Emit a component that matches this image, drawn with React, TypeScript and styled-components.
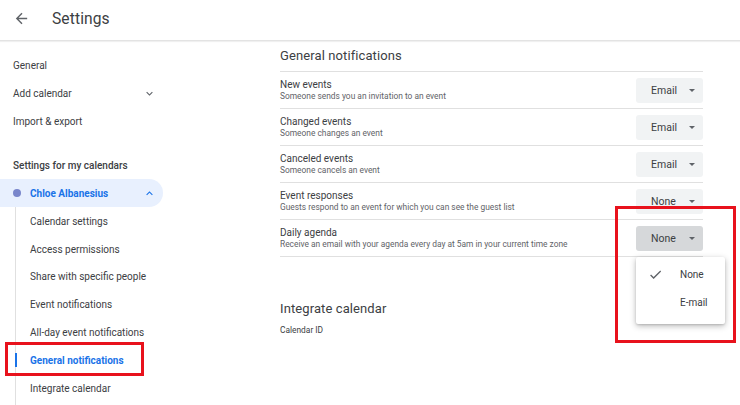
import React from "react";
import styled, { createGlobalStyle } from "styled-components";

const Global = createGlobalStyle`
  html, body { margin: 0; padding: 0; background: #fff; }
  body { font-family: Roboto, "Noto Sans", Arial, sans-serif; color: #3c4043; }
  * { box-sizing: border-box; }
`;

const Page = styled.div`
  width: 740px;
  height: 405px;
  overflow: hidden;
  position: relative;
  background: #fff;
`;

const Header = styled.header`
  height: 41px;
  display: flex;
  align-items: center;
  gap: 22px;
  padding-left: 13px;
  border-bottom: 1px solid #e3e3e3;
  box-shadow: 0 1px 1px rgba(0, 0, 0, 0.06);
`;

const BackBtn = styled.div`
  width: 17px;
  height: 17px;
  display: flex;
  align-items: center;
  justify-content: center;
  margin-top: -3px;
`;

const Title = styled.h1`
  margin: 0 0 3px;
  font-size: 15.6px;
  font-weight: 400;
  color: #3c4043;
  letter-spacing: 0.1px;
`;

const Body = styled.div`
  display: flex;
`;

const Sidebar = styled.nav`
  width: 280px;
  flex: none;
  padding-top: 11px;
`;

const NavItem = styled.div<{ $active?: boolean; $indent?: boolean }>`
  position: relative;
  height: 27.8px;
  display: flex;
  align-items: center;
  padding-left: ${(p) => (p.$indent ? "14px" : "13px")};
  width: 163px;
  font-size: 10px;
  font-weight: ${(p) => (p.$active ? 700 : 400)};
  color: ${(p) => (p.$active ? "#1a73e8" : "#3c4043")};
  justify-content: space-between;
  padding-right: 7px;
`;

const SectionLabel = styled.div`
  height: 28px;
  margin-top: 16px;
  display: flex;
  align-items: center;
  padding-left: 13px;
  font-size: 10px;
  font-weight: 500;
  color: #3c4043;
`;

const CalendarPill = styled.div`
  height: 28px;
  width: 163px;
  background: #e8f0fe;
  border-radius: 0 14px 14px 0;
  display: flex;
  align-items: center;
  padding-left: 13px;
  padding-right: 7px;
  gap: 9px;
  font-size: 10px;
  font-weight: 700;
  color: #1a73e8;
`;

const Dot = styled.span`
  width: 8px;
  height: 8px;
  border-radius: 50%;
  background: #7986cb;
  flex: none;
`;

const PillLabel = styled.span`
  flex: 1;
`;

const SubList = styled.div`
  margin-left: 15px;
  border-left: 1px solid #e0e0e0;
  padding-bottom: 20px;
`;

const ActiveBar = styled.span`
  position: absolute;
  left: -1px;
  top: 7px;
  width: 2px;
  height: 14px;
  background: #1a73e8;
`;

const Annotation = styled.div<{ $top: number; $left: number; $w: number; $h: number }>`
  position: absolute;
  top: ${(p) => p.$top}px;
  left: ${(p) => p.$left}px;
  width: ${(p) => p.$w}px;
  height: ${(p) => p.$h}px;
  border: 3px solid #e8121c;
  pointer-events: none;
  z-index: 5;
`;

const Main = styled.main`
  flex: 1;
  padding-right: 37px;
`;

const SectionTitle = styled.h2<{ $top?: number }>`
  margin: 0;
  height: ${(p) => (p.$top ? "auto" : "30px")};
  padding-top: ${(p) => p.$top ?? 0}px;
  padding-bottom: ${(p) => (p.$top ? 0 : 2)}px;
  font-size: 13px;
  font-weight: 400;
  color: #3c4043;
  display: flex;
  align-items: center;
  letter-spacing: 0.1px;
`;

const List = styled.div`
  border-top: 1px solid #e0e0e0;
`;

const Row = styled.div`
  height: 37px;
  border-bottom: 1px solid #e0e0e0;
  display: flex;
  align-items: center;
  justify-content: space-between;
`;

const RowText = styled.div`
  display: flex;
  flex-direction: column;
`;

const RowTitle = styled.div`
  font-size: 10px;
  color: #3c4043;
  line-height: 12px;
`;

const RowSub = styled.div`
  font-size: 8.4px;
  color: #5f6368;
  line-height: 11px;
`;

const SelectWrap = styled.div`
  position: relative;
`;

const Select = styled.div<{ $pressed?: boolean }>`
  width: 67px;
  height: 25px;
  border-radius: 3px;
  background: ${(p) => (p.$pressed ? "#d6d8da" : "#f1f3f4")};
  display: flex;
  align-items: center;
  padding-left: 15px;
  padding-right: 8px;
  justify-content: space-between;
  font-size: 10.5px;
  color: #3c4043;
`;

const Caret = styled.span`
  width: 0;
  height: 0;
  border-left: 3.5px solid transparent;
  border-right: 3.5px solid transparent;
  border-top: 3.5px solid #5f6368;
`;

const Menu = styled.div`
  position: absolute;
  top: 31px;
  left: 0;
  width: 89px;
  height: 67px;
  background: #fff;
  box-shadow: 0 2px 6px rgba(0, 0, 0, 0.28), 0 1px 2px rgba(0, 0, 0, 0.12);
  border-radius: 2px;
  padding-top: 4px;
  z-index: 4;
`;

const MenuItem = styled.div`
  height: 28px;
  display: flex;
  align-items: center;
  padding-left: 12px;
  gap: 17px;
  font-size: 10px;
  color: #3c4043;
`;

const CheckSlot = styled.span`
  width: 15px;
  height: 15px;
  display: flex;
  align-items: center;
`;

const SmallLabel = styled.div`
  margin-top: 9px;
  font-size: 8.4px;
  color: #3c4043;
`;

const rows = [
  { t: "New events", s: "Someone sends you an invitation to an event", v: "Email" },
  { t: "Changed events", s: "Someone changes an event", v: "Email" },
  { t: "Canceled events", s: "Someone cancels an event", v: "Email" },
  { t: "Event responses", s: "Guests respond to an event for which you can see the guest list", v: "None" },
];

const Chevron = ({ up }: { up?: boolean }) => (
  <svg width="13" height="13" viewBox="0 0 24 24">
    <path
      d={up ? "M7.41 15.41 12 10.83l4.59 4.58L18 14l-6-6-6 6z" : "M7.41 8.59 12 13.17l4.59-4.58L18 10l-6 6-6-6z"}
      fill={up ? "#1a73e8" : "#5f6368"}
    />
  </svg>
);

export default function App() {
  const subs = [
    "Calendar settings",
    "Access permissions",
    "Share with specific people",
    "Event notifications",
    "All-day event notifications",
    "General notifications",
    "Integrate calendar",
  ];
  return (
    <Page>
      <Global />
      <Header>
        <BackBtn>
          <svg width="17" height="17" viewBox="0 0 24 24">
            <path d="M20 11H7.83l5.59-5.59L12 4l-8 8 8 8 1.41-1.41L7.83 13H20v-2z" fill="#5f6368" />
          </svg>
        </BackBtn>
        <Title>Settings</Title>
      </Header>
      <Body>
        <Sidebar>
          <NavItem>General</NavItem>
          <NavItem>
            Add calendar
            <Chevron />
          </NavItem>
          <NavItem>Import &amp; export</NavItem>
          <SectionLabel>Settings for my calendars</SectionLabel>
          <CalendarPill>
            <Dot />
            <PillLabel>Chloe Albanesius</PillLabel>
            <Chevron up />
          </CalendarPill>
          <SubList>
            {subs.map((s) => {
              const active = s === "General notifications";
              return (
                <NavItem key={s} $indent $active={active}>
                  {s}
                  {active && (
                    <>
                      <ActiveBar />
                      <Annotation $top={-4} $left={-11} $w={139} $h={34} />
                    </>
                  )}
                </NavItem>
              );
            })}
          </SubList>
        </Sidebar>
        <Main>
          <SectionTitle>General notifications</SectionTitle>
          <List>
            {rows.map((r) => (
              <Row key={r.t}>
                <RowText>
                  <RowTitle>{r.t}</RowTitle>
                  <RowSub>{r.s}</RowSub>
                </RowText>
                <Select>
                  {r.v}
                  <Caret />
                </Select>
              </Row>
            ))}
            <Row>
              <RowText>
                <RowTitle>Daily agenda</RowTitle>
                <RowSub>Receive an email with your agenda every day at 5am in your current time zone</RowSub>
              </RowText>
              <SelectWrap>
                <Select $pressed>
                  None
                  <Caret />
                </Select>
                <Menu>
                  <MenuItem>
                    <CheckSlot>
                      <svg width="15" height="15" viewBox="0 0 24 24">
                        <path d="M9 16.17 4.83 12l-1.42 1.41L9 19 21 7l-1.41-1.41z" fill="#5f6368" />
                      </svg>
                    </CheckSlot>
                    None
                  </MenuItem>
                  <MenuItem>
                    <CheckSlot />
                    E-mail
                  </MenuItem>
                </Menu>
                <Annotation $top={-20} $left={-21} $w={121} $h={137} />
              </SelectWrap>
            </Row>
          </List>
          <SectionTitle $top={44}>Integrate calendar</SectionTitle>
          <SmallLabel>Calendar ID</SmallLabel>
        </Main>
      </Body>
    </Page>
  );
}
